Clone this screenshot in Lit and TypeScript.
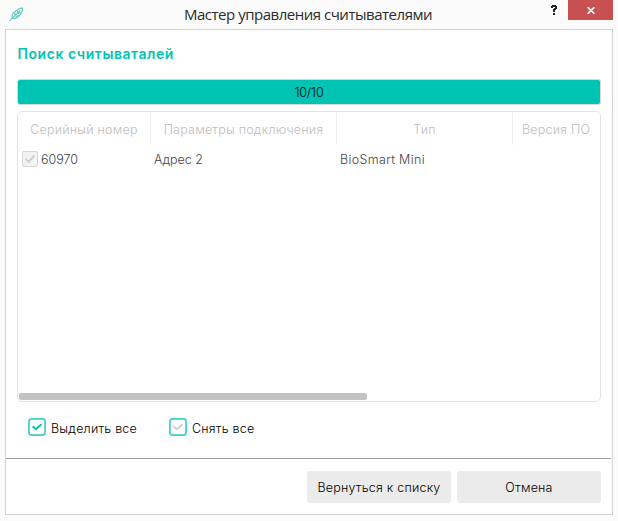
import { LitElement, html, css } from "lit";
import { customElement, property } from "lit/decorators.js";

@customElement("check-box")
class CheckBox extends LitElement {
  @property() tone = "on";

  static styles = css`
    :host { display: block; flex: none; }
    svg { display: block; }
    .on { stroke: #00c4b3; }
    .off { stroke: #cfcfcf; }
    .box { fill: #fff; stroke: #3fd0c4; stroke-width: 1.7; }
    .grey { fill: #f3f3f3; stroke: #d6d6d6; stroke-width: 1; }
    .tick { fill: none; stroke-width: 1.9; }
  `;

  render() {
    if (this.tone === "disabled") {
      return html`<svg width="16" height="16" viewBox="0 0 16 16">
        <rect class="grey" x="0.5" y="0.5" width="15" height="15" rx="1.5" />
        <path class="tick off" d="M3.3 7.6 L6.6 10.8 L12.6 4.4" />
      </svg>`;
    }
    return html`<svg width="18" height="18" viewBox="0 0 18 18">
      <rect class="box" x="0.9" y="0.9" width="16.2" height="16.2" rx="2.6" />
      <path class="tick ${this.tone}" d="M4.7 8.2 L7.9 11.2 L13.6 6.2" />
    </svg>`;
  }
}

@customElement("app-root")
class AppRoot extends LitElement {
  static styles = css`
    :host {
      display: flex;
      flex-direction: column;
      box-sizing: border-box;
      width: 618px;
      height: 521px;
      padding: 0 5px 6px;
      background: #fbfbfb;
      font: 300 12.5px/16px Inter, "Open Sans", sans-serif;
      letter-spacing: 0.22px;
      color: #000;
      white-space: nowrap;
      overflow: hidden;
    }
    * { box-sizing: border-box; }
    .titlebar { display: flex; height: 29px; }
    .logo { width: 34px; padding: 7px 0 0 4px; }
    .logo svg { display: block; }
    .title {
      flex: 1;
      text-align: center;
      padding: 4px 0 0 34px;
      font: 400 15px/20px "Open Sans", sans-serif;
      letter-spacing: -0.48px;
      color: #2b2b2b;
    }
    .controls { display: flex; width: 70px; }
    .help { width: 25px; padding: 5px 0 0 8px; }
    .help svg { display: block; }
    .close {
      width: 45px; height: 20px; background: #c75050;
      display: flex; align-items: center; justify-content: center;
      padding-top: 1px;
    }
    .frame {
      width: 608px; height: 486px;
      border: 1px solid #d3d3d3; background: #fff;
      display: flex; flex-direction: column;
    }
    .content { padding: 15px 11px 0; height: 428px; }
    h1 {
      margin: 0; padding-left: 0.5px; height: 34px;
      font: 600 14px/18px Inter, sans-serif; letter-spacing: 0.55px; color: #00c4b3;
    }
    .progress {
      height: 26px; border: 1px solid #d9d9d9; border-radius: 3px;
      background: #00c4b3; text-align: center; line-height: 26px; letter-spacing: -0.1px;
    }
    .table {
      margin-top: 6px; height: 291px; border: 1px solid #e3e3e3; border-radius: 5px;
      display: flex; flex-direction: column; padding: 1px 1px 1px 0;
    }
    .cols { display: grid; grid-template-columns: 133px 186px 176px 1fr; }
    .head { height: 33px; grid-template-rows: 32px; color: #bdbdbd; }
    .head div { border-right: 1px solid #eeeeee; text-align: center; line-height: 33px; }
    .head div:last-child { border-right: 0; }
    .row { height: 28px; grid-template-rows: 28px; color: #444; line-height: 28px; }
    .row div { padding-left: 3px; }
    .row .first { display: flex; align-items: flex-start; gap: 3px; padding-left: 4px; letter-spacing: 0; }
    .row check-box { margin-top: 5px; }
    .row .plain { letter-spacing: 0; }
    .row .wide { letter-spacing: 0.34px; }
    .bar { margin: auto 0 0 1px; width: 348px; height: 7px; border-radius: 2px; background: #c3c3c3; }
    .options { display: flex; padding: 16px 0 0 11px; }
    .option { display: flex; gap: 5px; line-height: 21px; width: 141px; }
    .foot {
      width: 605px; border-top: 1px solid #a0a0a0;
      display: flex; justify-content: flex-end; gap: 6px; padding: 12px 10px 0 0;
    }
    button {
      width: 144px; height: 32px; padding: 1px 0 0; border: 0; border-radius: 3px;
      background: #ebebeb; font: inherit; letter-spacing: inherit; color: #000;
    }
  `;

  render() {
    return html`
      <div class="titlebar">
        <div class="logo">
          <svg width="15" height="15" viewBox="0 0 15 15" fill="none" stroke="#62cfc5" stroke-width="1.2">
            <path d="M0.8 13.6 L3.4 11 M3.4 11 C1.8 7.6 5.6 4.6 8 3 C10 1.6 12 1 13.4 1.2 C13.8 3 12.8 5.6 11.2 7.6 C9.4 10 6.4 12.4 3.4 11 Z" />
            <path d="M3.4 11 L11.2 3.4 M6 5.6 L6 8.4 M8.6 3.4 L8.6 6 M6.6 9.6 L9.6 8.4 M9 6.6 L11.6 5.6" />
          </svg>
        </div>
        <div class="title">Мастер управления считывателями</div>
        <div class="controls">
          <div class="help">
            <svg width="7" height="10" viewBox="0 0 7 10" fill="#222">
              <path d="M1 0H5V1H6V4H5V5H4V7H2V4H3V3H4V2H2V3H0V1H1ZM2 8H4V10H2Z" />
            </svg>
          </div>
          <div class="close">
            <svg width="8" height="7" viewBox="0 0 8 7" stroke="#fff" stroke-width="1.7">
              <path d="M0.6 0.2 L7.4 6.8 M7.4 0.2 L0.6 6.8" />
            </svg>
          </div>
        </div>
      </div>
      <div class="frame">
        <div class="content">
          <h1>Поиск считываталей</h1>
          <div class="progress">10/10</div>
          <div class="table">
            <div class="cols head">
              <div>Серийный номер</div>
              <div>Параметры подключения</div>
              <div>Тип</div>
              <div>Версия ПО</div>
            </div>
            <div class="cols row">
              <div class="first"><check-box tone="disabled"></check-box><span>60970</span></div>
              <div class="plain">Адрес 2</div>
              <div class="wide">BioSmart Mini</div>
              <div></div>
            </div>
            <div class="bar"></div>
          </div>
          <div class="options">
            <div class="option"><check-box tone="on"></check-box><span>Выделить все</span></div>
            <div class="option"><check-box tone="off"></check-box><span>Снять все</span></div>
          </div>
        </div>
        <div class="foot">
          <button>Вернуться к списку</button>
          <button>Отмена</button>
        </div>
      </div>
    `;
  }
}
